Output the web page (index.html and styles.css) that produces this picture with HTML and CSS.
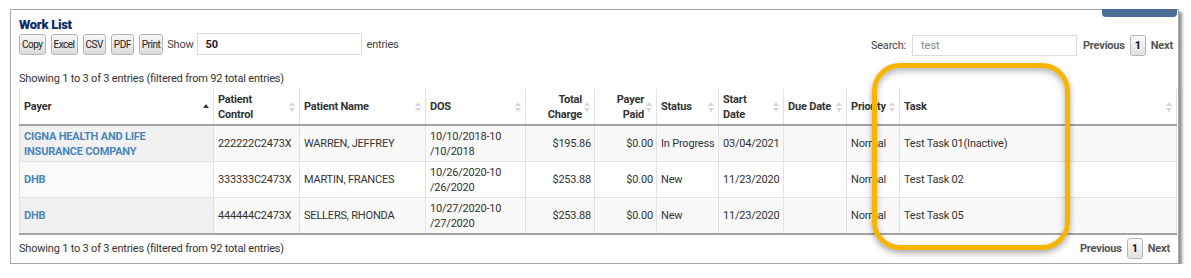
FILE: index.html
```html
<!DOCTYPE html>
<html lang="en">

<head>
    <meta charset="UTF-8">
    <title>Work List</title>
    <link rel="stylesheet" href="styles.css">
</head>

<body>
    <div class="frame">
        <div class="tab"></div>
        <h2 class="title">Work List</h2>

        <div class="toolbar">
            <div class="left-tools">
                <button class="btn">Copy</button>
                <button class="btn">Excel</button>
                <button class="btn">CSV</button>
                <button class="btn">PDF</button>
                <button class="btn">Print</button>
                <span class="label show-label">Show</span>
                <input class="show-input" type="text" value="50">
                <span class="label">entries</span>
            </div>
            <div class="right-tools">
                <span class="label">Search:</span>
                <input class="search-input" type="text" value="test">
                <div class="pager">
                    <span>Previous</span>
                    <span class="page">1</span>
                    <span>Next</span>
                </div>
            </div>
        </div>

        <div class="info">Showing 1 to 3 of 3 entries (filtered from 92 total entries)</div>

        <table class="grid">
            <colgroup>
                <col style="width: 194px">
                <col style="width: 86px">
                <col style="width: 126px">
                <col style="width: 100px">
                <col style="width: 69px">
                <col style="width: 62px">
                <col style="width: 62px">
                <col style="width: 65px">
                <col style="width: 63px">
                <col style="width: 53px">
                <col>
            </colgroup>
            <thead>
                <tr>
                    <th class="sorted">Payer</th>
                    <th>Patient<br>Control</th>
                    <th>Patient Name</th>
                    <th>DOS</th>
                    <th class="num">Total<br>Charge</th>
                    <th class="num">Payer<br>Paid</th>
                    <th>Status</th>
                    <th>Start<br>Date</th>
                    <th>Due Date</th>
                    <th>Priority</th>
                    <th>Task</th>
                </tr>
            </thead>
            <tbody>
                <tr class="odd">
                    <td class="payer"><a href="#">CIGNA HEALTH AND LIFE<br>INSURANCE COMPANY</a></td>
                    <td>222222C2473X</td>
                    <td>WARREN, JEFFREY</td>
                    <td>10/10/2018-10<br>/10/2018</td>
                    <td class="num">$195.86</td>
                    <td class="num">$0.00</td>
                    <td class="nowrap">In Progress</td>
                    <td>03/04/2021</td>
                    <td></td>
                    <td>Normal</td>
                    <td>Test Task 01(Inactive)</td>
                </tr>
                <tr class="even">
                    <td class="payer"><a href="#">DHB</a></td>
                    <td>333333C2473X</td>
                    <td>MARTIN, FRANCES</td>
                    <td>10/26/2020-10<br>/26/2020</td>
                    <td class="num">$253.88</td>
                    <td class="num">$0.00</td>
                    <td>New</td>
                    <td>11/23/2020</td>
                    <td></td>
                    <td>Normal</td>
                    <td>Test Task 02</td>
                </tr>
                <tr class="odd">
                    <td class="payer"><a href="#">DHB</a></td>
                    <td>444444C2473X</td>
                    <td>SELLERS, RHONDA</td>
                    <td>10/27/2020-10<br>/27/2020</td>
                    <td class="num">$253.88</td>
                    <td class="num">$0.00</td>
                    <td>New</td>
                    <td>11/23/2020</td>
                    <td></td>
                    <td>Normal</td>
                    <td>Test Task 05</td>
                </tr>
            </tbody>
        </table>

        <div class="footer">
            <div class="info">Showing 1 to 3 of 3 entries (filtered from 92 total entries)</div>
            <div class="pager">
                <span>Previous</span>
                <span class="page">1</span>
                <span>Next</span>
            </div>
        </div>

        <!-- highlight ring drawn over the Task column -->
        <div class="highlight"></div>
    </div>
</body>
</html>
```

FILE: styles.css
```css
body {
    margin: 0;
    background-color: #fff;
    font-family: Roboto, "Liberation Sans", sans-serif;
    font-size: 11px;
    letter-spacing: -0.2px;
    color: #333;
}

.frame {
    position: relative;
    box-sizing: border-box;
    width: 1169px;
    height: 255px;
    margin: 9px 0 0 10px;
    padding: 0 8px;
    border: 1px solid #a9a9a9;
    background-color: #fff;
    box-shadow: 3px 3px 3px rgba(0, 0, 0, 0.45);
}

.tab {
    position: absolute;
    top: -1px;
    right: 1px;
    width: 75px;
    height: 8px;
    background-color: #4b6c95;
    border-radius: 0 0 4px 4px;
}

.title {
    margin: 7px 0 0 0;
    height: 16px;
    font-size: 13px;
    font-weight: 900;
    color: #0c2c69;
    letter-spacing: -0.3px;
}

.toolbar {
    display: flex;
    justify-content: space-between;
    align-items: flex-start;
    height: 36px;
    margin-top: 0;
}

.left-tools,
.right-tools {
    display: flex;
    align-items: center;
    gap: 5px;
}

.right-tools {
    gap: 6px;
    margin-top: 2px;
    margin-right: -3px;
}

.btn {
    height: 21px;
    padding: 0 2px;
    font-family: Roboto, "Liberation Sans", sans-serif;
    font-size: 10px;
    letter-spacing: -0.5px;
    color: #222;
    background: linear-gradient(#f7f7f7, #dcdcdc);
    border: 1px solid #b5b5b5;
    border-radius: 3px;
}

.label {
    color: #444;
    font-size: 11px;
}

.show-label {
    margin-left: -1px;
    margin-right: -2px;
}

.show-input,
.search-input {
    box-sizing: border-box;
    width: 165px;
    height: 22px;
    padding: 0 8px;
    border: 1px solid #ddd;
    font-family: Roboto, "Liberation Sans", sans-serif;
    font-size: 11px;
}

.show-input {
    font-weight: bold;
    color: #222;
}

.search-input {
    height: 21px;
    color: #888;
}

.pager {
    display: flex;
    align-items: center;
    gap: 5px;
    font-weight: bold;
    color: #555;
}

.page {
    box-sizing: border-box;
    width: 16px;
    height: 21px;
    line-height: 19px;
    text-align: center;
    color: #111;
    background: linear-gradient(#fafafa, #e2e2e2);
    border: 1px solid #b5b5b5;
    border-radius: 3px;
}

.info {
    height: 14px;
    line-height: 14px;
    margin-top: 3px;
    color: #333;
}

.grid {
    table-layout: fixed;
    width: 1158px;
    margin-top: 3px;
    border-collapse: collapse;
    border-left: 1px solid #e2e2e2;
    border-right: 1px solid #e2e2e2;
}

.grid th,
.grid td {
    padding: 0 4px;
    border: 1px solid #e2e2e2;
    text-align: left;
    line-height: 15px;
}

.grid th {
    position: relative;
    height: 35px;
    padding-right: 12px;
    font-weight: bold;
    color: #333;
    background-color: #fff;
    border-top: none;
    border-bottom: 2px solid #a3a3a3;
    white-space: nowrap;
}

/* sort arrows */
.grid th::before,
.grid th::after {
    content: "";
    position: absolute;
    right: 4px;
    top: 50%;
    border-left: 3px solid transparent;
    border-right: 3px solid transparent;
}

.grid th::before {
    margin-top: -5px;
    border-bottom: 4px solid #d6d6d6;
}

.grid th::after {
    margin-top: 1px;
    border-top: 4px solid #d6d6d6;
}

.grid th.sorted::before {
    margin-top: -3px;
    border-bottom-color: #3a3a3a;
}

.grid th.sorted::after {
    display: none;
}

.grid th.num,
.grid td.num {
    text-align: right;
}

.grid td {
    height: 35px;
    color: #333;
}

.grid td.num {
    padding-right: 3px;
}

.grid td.nowrap {
    white-space: nowrap;
}

.grid tr.odd td {
    background-color: #f9f9f9;
}

.grid tr.odd td.payer {
    background-color: #f1f1f1;
}

.grid tr.even td.payer {
    background-color: #fafafa;
}

.grid tbody tr:last-child td {
    border-bottom: 2px solid #a3a3a3;
}

.payer a {
    font-weight: bold;
    color: #4a86bd;
    text-decoration: none;
}

.footer {
    display: flex;
    justify-content: space-between;
    align-items: center;
    margin-top: 3px;
}

.footer .info {
    margin-top: 0;
    padding-top: 1px;
}

.highlight {
    position: absolute;
    left: 861px;
    top: 53px;
    width: 188px;
    height: 177px;
    border: 5px solid #f7b500;
    border-radius: 28px;
    box-shadow: 0 3px 6px rgba(0, 0, 0, 0.35), inset 0 3px 6px rgba(0, 0, 0, 0.3);
}
```
